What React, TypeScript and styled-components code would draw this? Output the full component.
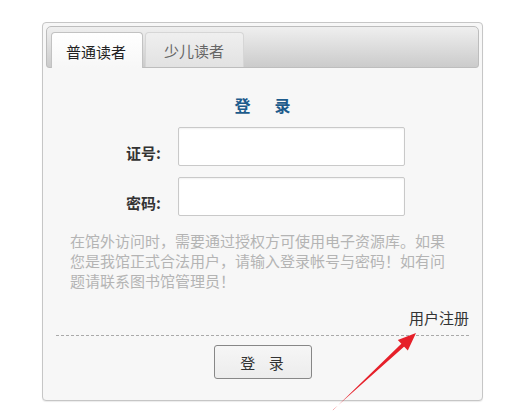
import styled, { createGlobalStyle } from "styled-components"

const GlobalStyle = createGlobalStyle`
  html, body {
    margin: 0;
    padding: 0;
    background: #ffffff;
  }
  body {
    font-family: "Noto Sans CJK SC", "Liberation Sans", sans-serif;
    color: #333;
  }
`

const Stage = styled.div`
  position: relative;
  width: 532px;
  height: 418px;
  overflow: hidden;
  padding: 22px 0 0 42px;
  box-sizing: border-box;
`

const Panel = styled.div`
  width: 441px;
  height: 379px;
  box-sizing: border-box;
  border: 1px solid #c6c6c6;
  border-radius: 4px;
  background: #f7f7f7;
  box-shadow: 0 1px 1px rgba(0, 0, 0, 0.08);
  padding: 3px 3px 0 3px;
  display: flex;
  flex-direction: column;
`

const TabBar = styled.div`
  height: 42px;
  box-sizing: border-box;
  border: 1px solid #bdbdbd;
  border-radius: 5px 5px 3px 3px;
  background: linear-gradient(#efefef, #cbcbcb);
  padding: 5px 0 0 4px;
  display: flex;
  align-items: stretch;
  gap: 2px;
`

const Tab = styled.div<{ $active?: boolean }>`
  box-sizing: border-box;
  display: flex;
  align-items: center;
  padding: ${p => p.$active ? "2px 16px 0 14px" : "2px 19px 0 18px"};
  margin-bottom: ${p => p.$active ? "-1px" : "0"};
  font-size: 15px;
  line-height: 20px;
  color: ${p => p.$active ? "#222" : "#666"};
  border: 1px solid ${p => p.$active ? "#c2c2c2" : "#d6d6d6"};
  border-bottom: none;
  border-radius: 4px 4px 0 0;
  background: ${p => p.$active
    ? "linear-gradient(#ffffff, #f7f7f7)"
    : "linear-gradient(#efefef, #e2e2e2)"};
`

const Title = styled.div`
  margin-top: 26px;
  text-align: center;
  font-size: 16px;
  line-height: 22px;
  font-weight: bold;
  color: #1d5b8c;
  letter-spacing: 4px;
  padding-left: 4px;
`

const Form = styled.div`
  margin-top: 11px;
  display: grid;
  grid-template-columns: 115px 227px;
  column-gap: 17px;
  row-gap: 11px;
`

const Label = styled.label`
  align-self: end;
  justify-self: end;
  margin-bottom: 3px;
  font-size: 15px;
  line-height: 20px;
  font-weight: bold;
  color: #333;
`

const Input = styled.input`
  width: 227px;
  height: 39px;
  box-sizing: border-box;
  border: 1px solid #c9c9c9;
  border-radius: 2px;
  background: #fff;
  box-shadow: inset 0 1px 2px rgba(0, 0, 0, 0.06);
  outline: none;
`

const Notice = styled.p`
  margin: 15px 0 0 24px;
  width: 382px;
  font-size: 15px;
  line-height: 20px;
  color: #b4b4b4;
`

const Footer = styled.div`
  margin: 17px 10px 0 10px;
  padding-bottom: 7px;
  border-bottom: 1px dashed #aaaaaa;
  text-align: right;
  font-size: 15px;
  line-height: 20px;
  color: #333;
`

const Actions = styled.div`
  margin-top: 9px;
  display: flex;
  justify-content: center;
`

const Button = styled.button`
  width: 98px;
  height: 34px;
  box-sizing: border-box;
  border: 1px solid #878787;
  border-radius: 3px;
  background: linear-gradient(#f6f6f6, #ececec);
  font-family: inherit;
  font-size: 15px;
  color: #333;
  letter-spacing: 5px;
  padding: 0 0 0 4px;
`

const Arrow = styled.svg`
  position: absolute;
  left: 0;
  top: 0;
  pointer-events: none;
`

export default function App() {
  return (
    <>
      <GlobalStyle />
      <Stage>
        <Panel>
          <TabBar>
            <Tab $active>普通读者</Tab>
            <Tab>少儿读者</Tab>
          </TabBar>
          <Title>登　录</Title>
          <Form>
            <Label>证号:</Label>
            <Input type="text" />
            <Label>密码:</Label>
            <Input type="password" />
          </Form>
          <Notice>
            在馆外访问时，需要通过授权方可使用电子资源库。如果您是我馆正式合法用户，请输入登录帐号与密码！如有问题请联系图书馆管理员！
          </Notice>
          <Footer>用户注册</Footer>
          <Actions>
            <Button>登 录</Button>
          </Actions>
        </Panel>
        <Arrow width="532" height="418" viewBox="0 0 532 418">
          <polygon
            points="332.7,410.4 333.3,409.6 405.4,345.5 402.6,342.5"
            fill="#e6202a"
          />
          <polygon
            points="416,333 407.8,350.6 397.8,340"
            fill="#e6202a"
          />
        </Arrow>
      </Stage>
    </>
  )
}
